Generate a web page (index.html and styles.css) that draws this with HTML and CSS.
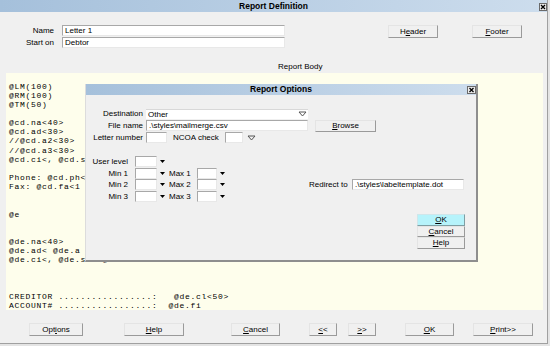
FILE: index.html
```html
<!DOCTYPE html>
<html>
<head>
  <title>Report Definition</title>
  <link rel="stylesheet" href="styles.css">
</head>
<body>
<div class="window">
  <div class="titlebar">
    <span class="title">Report Definition</span>
    <svg class="close-btn" viewBox="0 0 8 8"><rect x="0.5" y="0.5" width="7" height="7" fill="#ececec" stroke="#6a6a6a"/><path d="M2 2 L6 6 M6 2 L2 6" stroke="#000" stroke-width="1.3"/></svg>
  </div>

  <div class="top">
    <div class="fields">
      <span class="field-label">Name</span>
      <div class="input">Letter 1</div>
      <span class="field-label">Start on</span>
      <div class="input">Debtor</div>
    </div>
    <button class="btn header-btn">H<u>e</u>ader</button>
    <button class="btn footer-btn"><u>F</u>ooter</button>
  </div>

  <div class="body-label">Report Body</div>
  <div class="report-body">
    <div class="ln">@LM(100)</div>
    <div class="ln">@RM(100)</div>
    <div class="ln">@TM(50)</div>
    <div class="ln"></div>
    <div class="ln">@cd.na&lt;40&gt;</div>
    <div class="ln">@cd.ad&lt;30&gt;</div>
    <div class="ln">//@cd.a2&lt;30&gt;</div>
    <div class="ln">//@cd.a3&lt;30&gt;</div>
    <div class="ln">@cd.ci&lt;, @cd.s</div>
    <div class="ln"></div>
    <div class="ln">Phone: @cd.ph&lt;</div>
    <div class="ln">Fax: @cd.fa&lt;1</div>
    <div class="ln"></div>
    <div class="ln"></div>
    <div class="ln">@e</div>
    <div class="ln"></div>
    <div class="ln"></div>
    <div class="ln">@de.na&lt;40&gt;</div>
    <div class="ln">@de.ad&lt; @de.a</div>
    <div class="ln">@de.ci&lt;, @de.st&lt; @de.zi&lt;</div>
    <div class="ln"></div>
    <div class="ln"></div>
    <div class="ln"></div>
    <div class="ln">CREDITOR .................:   @de.cl&lt;50&gt;</div>
    <div class="ln">ACCOUNT# .................:  @de.fi</div>
  </div>

  <div class="bottom">
    <button class="btn b-options">Opt<u>i</u>ons</button>
    <button class="btn b-help"><u>H</u>elp</button>
    <button class="btn b-cancel"><u>C</u>ancel</button>
    <button class="btn b-prev"><u>&lt;</u>&lt;</button>
    <button class="btn b-next"><u>&gt;</u>&gt;</button>
    <button class="btn b-ok"><u>O</u>K</button>
    <button class="btn b-print"><u>P</u>rint&gt;&gt;</button>
  </div>

  <!-- Report Options dialog -->
  <div class="dialog">
    <div class="titlebar dlg-titlebar">
      <span class="title">Report Options</span>
      <svg class="close-btn" viewBox="0 0 9 8"><rect x="0.5" y="0.5" width="8" height="7" fill="#ececec" stroke="#6a6a6a"/><path d="M2.5 2 L6.5 6 M6.5 2 L2.5 6" stroke="#000" stroke-width="1.3"/></svg>
    </div>
    <div class="dlg-body">
      <div class="row">
        <span class="dlg-label">Destination</span>
        <div class="select dest-select">
          <span>Other</span>
          <svg class="hollow-arrow" viewBox="0 0 9 6"><path d="M1 1 H8 L4.5 5 Z" fill="none" stroke="#555"/></svg>
        </div>
      </div>
      <div class="row">
        <span class="dlg-label">File name</span>
        <div class="input file-input">.\styles\mailmerge.csv</div>
        <button class="btn browse-btn"><u>B</u>rowse</button>
      </div>
      <div class="row">
        <span class="dlg-label">Letter number</span>
        <div class="input letter-input"></div>
        <span class="ncoa-label">NCOA check</span>
        <div class="input ncoa-input"></div>
        <svg class="hollow-arrow ncoa-arrow" viewBox="0 0 9 6"><path d="M1 1 H8 L4.5 5 Z" fill="none" stroke="#555"/></svg>
      </div>

      <div class="levels">
        <div class="row lv-row">
          <span class="lv-label">User level</span>
          <div class="input lv-input"></div>
          <svg class="drop" viewBox="0 0 9 9"><path d="M2 3 H7 L4.5 6 Z" fill="#000"/></svg>
        </div>
        <div class="row lv-row">
          <span class="lv-label">Min 1</span>
          <div class="input lv-input"></div>
          <svg class="drop" viewBox="0 0 9 9"><path d="M2 3 H7 L4.5 6 Z" fill="#000"/></svg>
          <span class="max-label">Max 1</span>
          <div class="input max-input"></div>
          <svg class="drop" viewBox="0 0 9 9"><path d="M2 3 H7 L4.5 6 Z" fill="#000"/></svg>
        </div>
        <div class="row lv-row">
          <span class="lv-label">Min 2</span>
          <div class="input lv-input"></div>
          <svg class="drop" viewBox="0 0 9 9"><path d="M2 3 H7 L4.5 6 Z" fill="#000"/></svg>
          <span class="max-label">Max 2</span>
          <div class="input max-input"></div>
          <svg class="drop" viewBox="0 0 9 9"><path d="M2 3 H7 L4.5 6 Z" fill="#000"/></svg>
          <span class="redirect-label">Redirect to</span>
          <div class="input redirect-input">.\styles\labeltemplate.dot</div>
        </div>
        <div class="row lv-row">
          <span class="lv-label">Min 3</span>
          <div class="input lv-input"></div>
          <svg class="drop" viewBox="0 0 9 9"><path d="M2 3 H7 L4.5 6 Z" fill="#000"/></svg>
          <span class="max-label">Max 3</span>
          <div class="input max-input"></div>
          <svg class="drop" viewBox="0 0 9 9"><path d="M2 3 H7 L4.5 6 Z" fill="#000"/></svg>
        </div>
      </div>

      <div class="dlg-buttons">
        <button class="btn dlg-btn ok-btn"><u>O</u>K</button>
        <button class="btn dlg-btn"><u>C</u>ancel</button>
        <button class="btn dlg-btn"><u>H</u>elp</button>
      </div>
    </div>
  </div>
</div>
</body>
</html>
```

FILE: styles.css
```css
    body {
      margin: 0;
      background-color: #e4e4e4;
      font-family: "Liberation Sans", Arial, sans-serif;
      font-size: 8px;
      color: #000;
    }
    .window {
      position: relative;
      width: 547px;
      height: 343px;
      background-color: #f0f0f0;
      border-right: 1px solid #a0a0a0;
      border-bottom: 1px solid #a0a0a0;
      overflow: hidden;
    }
    .titlebar {
      display: grid;
      grid-template-columns: 1fr auto 1fr;
      align-items: start;
      height: 12px;
      background: linear-gradient(to right, #a5c0db, #cddded);
    }
    .title {
      grid-column: 2;
      font-weight: bold;
      font-size: 8.5px;
      line-height: 12px;
    }
    .close-btn {
      grid-column: 3;
      justify-self: end;
      display: block;
      width: 8px;
      height: 8px;
      margin-top: 3px;
    }

    .input {
      box-sizing: border-box;
      height: 11px;
      line-height: 9px;
      padding-left: 2px;
      background-color: #fff;
      border: 1px solid;
      border-color: #a8a8a8 #e8e8e8 #e8e8e8 #a8a8a8;
      white-space: nowrap;
      overflow: hidden;
    }
    .btn {
      box-sizing: border-box;
      height: 13px;
      padding: 0;
      font-family: inherit;
      font-size: 8px;
      line-height: 11px;
      color: #000;
      background-color: #f0f0f0;
      border: 1px solid;
      border-color: #e4e4e4 #9a9a9a #9a9a9a #e4e4e4;
    }

    /* top form */
    .top {
      display: flex;
      align-items: flex-start;
      margin-top: 13px;
    }
    .fields {
      display: grid;
      grid-template-columns: 54px 223px;
      column-gap: 8px;
      row-gap: 1px;
    }
    .field-label {
      text-align: right;
      line-height: 11px;
    }
    .header-btn {
      width: 50px;
      margin-left: 103px;
    }
    .footer-btn {
      width: 50px;
      margin-left: 34px;
    }
    .body-label {
      margin: 14px 0 0 278px;
      line-height: 10px;
    }
    .report-body {
      box-sizing: border-box;
      width: 537px;
      height: 237px;
      margin: 1px 0 0 6px;
      padding: 8.5px 0 0 3px;
      background-color: #fefeec;
      font-family: "Liberation Mono", "Courier New", monospace;
      font-size: 8px;
      letter-spacing: 0.7px;
      line-height: 9.17px;
      overflow: hidden;
    }
    .ln {
      height: 9.17px;
      white-space: pre;
    }

    /* bottom buttons */
    .bottom {
      display: flex;
      margin-top: 13px;
    }
    .b-options { width: 54px; margin-left: 29px; }
    .b-help { width: 60px; margin-left: 41px; }
    .b-cancel { width: 49px; margin-left: 47px; }
    .b-prev { width: 28px; margin-left: 29px; }
    .b-next { width: 28px; margin-left: 11px; }
    .b-ok { width: 49px; margin-left: 29px; }
    .b-print { width: 60px; margin-left: 19px; }

    /* dialog */
    .dialog {
      position: absolute;
      left: 85px;
      top: 84px;
      box-sizing: border-box;
      width: 393px;
      height: 178px;
      background-color: #f0f0f0;
      border-left: 1px solid #dcdcdc;
      border-right: 2px solid #8e8e8e;
      border-bottom: 2px solid #8e8e8e;
    }
    .dlg-titlebar {
      height: 11px;
    }
    .dlg-titlebar .title {
      line-height: 11px;
    }
    .dlg-titlebar .close-btn {
      width: 9px;
      margin-top: 2px;
    }
    .dlg-body {
      padding-top: 13px;
    }
    .row {
      display: flex;
      align-items: center;
      height: 11px;
      line-height: 9px;
      margin-bottom: 1px;
    }
    .dlg-label {
      width: 57px;
      margin-right: 3px;
      text-align: right;
      white-space: nowrap;
    }
    .select {
      box-sizing: border-box;
      display: flex;
      align-items: center;
      justify-content: space-between;
      height: 10px;
      padding: 0 1px 0 2px;
      background-color: #fff;
      border-top: 1px solid #d8d8d8;
    }
    .dest-select {
      width: 162px;
    }
    .hollow-arrow {
      display: block;
      width: 9px;
      height: 6px;
    }
    .file-input {
      width: 162px;
    }
    .browse-btn {
      width: 61px;
      height: 12px;
      line-height: 10px;
      margin-left: 7px;
    }
    .letter-input {
      width: 21px;
    }
    .ncoa-label {
      width: 44px;
      margin-left: 6px;
      white-space: nowrap;
    }
    .ncoa-input {
      width: 18px;
      margin-left: 8px;
    }
    .ncoa-arrow {
      margin-left: 4px;
    }

    .levels {
      margin-top: 13px;
    }
    .lv-row {
      margin-bottom: 0.5px;
    }
    .lv-label {
      width: 42px;
      text-align: right;
      white-space: nowrap;
    }
    .lv-input {
      width: 22px;
      margin-left: 7px;
    }
    .drop {
      display: block;
      width: 9px;
      height: 9px;
      margin-left: 1px;
    }
    .max-label {
      width: 28px;
      margin-left: 2px;
      white-space: nowrap;
    }
    .max-input {
      width: 20px;
    }
    .redirect-label {
      width: 38px;
      margin-left: 82px;
      white-space: nowrap;
    }
    .redirect-input {
      width: 112px;
      margin-left: 5px;
    }

    .dlg-buttons {
      display: flex;
      flex-direction: column;
      width: 48px;
      margin: 12.5px 0 0 331px;
    }
    .dlg-btn {
      height: 11.7px;
      line-height: 10px;
    }
    .ok-btn {
      background-color: #b6f3fb;
      border-color: #cfe6ea #7f9ea3 #7f9ea3 #cfe6ea;
    }
```
